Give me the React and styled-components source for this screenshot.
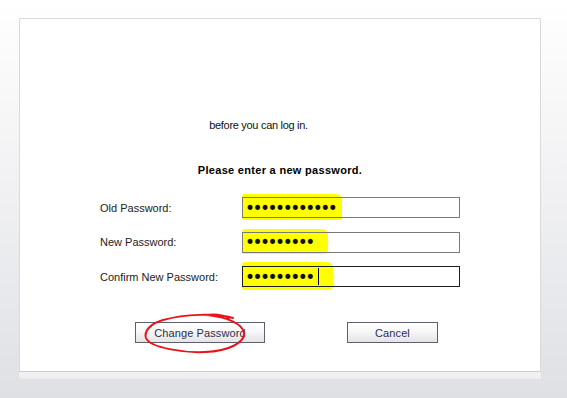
import React from 'react';
import styled, { createGlobalStyle } from 'styled-components';

const GlobalStyle = createGlobalStyle`
  html, body {
    margin: 0;
    padding: 0;
  }
  body {
    width: 567px;
    height: 398px;
    overflow: hidden;
    background: linear-gradient(to bottom, #ffffff 0%, #f6f6f7 30%, #e9eaed 70%, #dfe0e4 100%);
    font-family: 'Liberation Sans', Arial, sans-serif;
  }
`;

const Page = styled.div`
  padding: 18px 0 0 19px;
`;

const Panel = styled.div`
  width: 520px;
  height: 352px;
  background: #fff;
  border: 1px solid #dadada;
  border-bottom: none;
  display: flex;
  flex-direction: column;
  position: relative;
`;

const Footer = styled.div`
  width: 522px;
  height: 7px;
  border-top: 1px solid #cfcfd2;
  background:
    repeating-linear-gradient(90deg, #e6e7ea 0 1px, #f2f2f4 1px 2px) bottom / 100% 2px no-repeat,
    #f0f0f2;
`;

const Note = styled.p`
  margin: 100px 0 0;
  padding-right: 43px;
  text-align: center;
  font-size: 11px;
  letter-spacing: -0.3px;
  color: #111;
`;

const Heading = styled.p`
  margin: 33px 0 0;
  text-align: center;
  font-size: 11px;
  font-weight: bold;
  letter-spacing: 0.3px;
  color: #000;
`;

const Form = styled.div`
  margin: 21px 0 0 80px;
  display: grid;
  grid-template-columns: 142px 218px;
  grid-auto-rows: 21px;
  row-gap: 13.5px;
  align-items: center;
`;

const Label = styled.label`
  font-size: 11px;
  color: #222;
`;

const Field = styled.div`
  position: relative;
  width: 218px;
  height: 21px;
`;

const Highlight = styled.span`
  position: absolute;
  left: 0;
  top: ${(p) => p.$top}px;
  width: ${(p) => p.$w}px;
  height: ${(p) => p.$h}px;
  background: #ffff00;
  border-radius: 3px 6px 4px 2px;
`;

const Input = styled.input`
  position: relative;
  box-sizing: border-box;
  width: 218px;
  height: 21px;
  margin: 0;
  padding: 0 0 0 2px;
  border: 1px solid ${(p) => (p.$focus ? '#1e1e1e' : '#7a7a7a')};
  background: transparent;
  font-family: 'DejaVu Sans', sans-serif;
  font-size: 17px;
  letter-spacing: -2.5px;
  color: #111;
  outline: none;
`;

const Caret = styled.span`
  position: absolute;
  left: 76px;
  top: 2px;
  width: 1px;
  height: 17px;
  background: #000;
`;

const Buttons = styled.div`
  margin: 35px 0 0 115px;
  display: flex;
  gap: 82px;
  position: relative;
`;

const Button = styled.button`
  box-sizing: border-box;
  width: ${(p) => p.$w}px;
  height: 21px;
  padding: 0;
  border: 1px solid #5f5e6c;
  background: linear-gradient(to bottom, #ffffff 0%, #f7f7f8 45%, #e4e4e7 100%);
  font-family: 'Liberation Sans', Arial, sans-serif;
  font-size: 11px;
  letter-spacing: 0.1px;
  color: #2e2d4a;
`;

const Circle = styled.svg`
  position: absolute;
  left: 10px;
  top: -8px;
  overflow: visible;
  pointer-events: none;
`;

const rows = [
  { label: 'Old Password:', value: 'aaaaaaaaaaaa', hl: { top: -3, w: 100, h: 26 } },
  { label: 'New Password:', value: 'aaaaaaaaa', hl: { top: -3, w: 86, h: 25 } },
  { label: 'Confirm New Password:', value: 'aaaaaaaaa', hl: { top: -4, w: 91, h: 28 }, focus: true },
];

const App = () => {
  return (
    <Page>
      <GlobalStyle />
      <Panel>
        <Note>before you can log in.</Note>
        <Heading>Please enter a new password.</Heading>
        <Form>
          {rows.map((r) => (
            <React.Fragment key={r.label}>
              <Label>{r.label}</Label>
              <Field>
                <Highlight $top={r.hl.top} $w={r.hl.w} $h={r.hl.h} />
                <Input type="password" value={r.value} readOnly $focus={r.focus} />
                {r.focus && <Caret />}
              </Field>
            </React.Fragment>
          ))}
        </Form>
        <Buttons>
          <Button $w={130}>Change Password</Button>
          <Button $w={91}>Cancel</Button>
          <Circle width="100" height="38" viewBox="0 0 100 38">
            <path
              d="M88 4 C70 -1 40 0 18 6 C4 10 -1 18 1 24 C5 34 40 39 60 38 C85 37 100 28 99 19 C98 10 82 3 62 1 C70 0 78 1 84 4"
              fill="none"
              stroke="#e8131b"
              strokeWidth="2"
              strokeLinecap="round"
            />
          </Circle>
        </Buttons>
      </Panel>
      <Footer />
    </Page>
  );
};

export default App;
